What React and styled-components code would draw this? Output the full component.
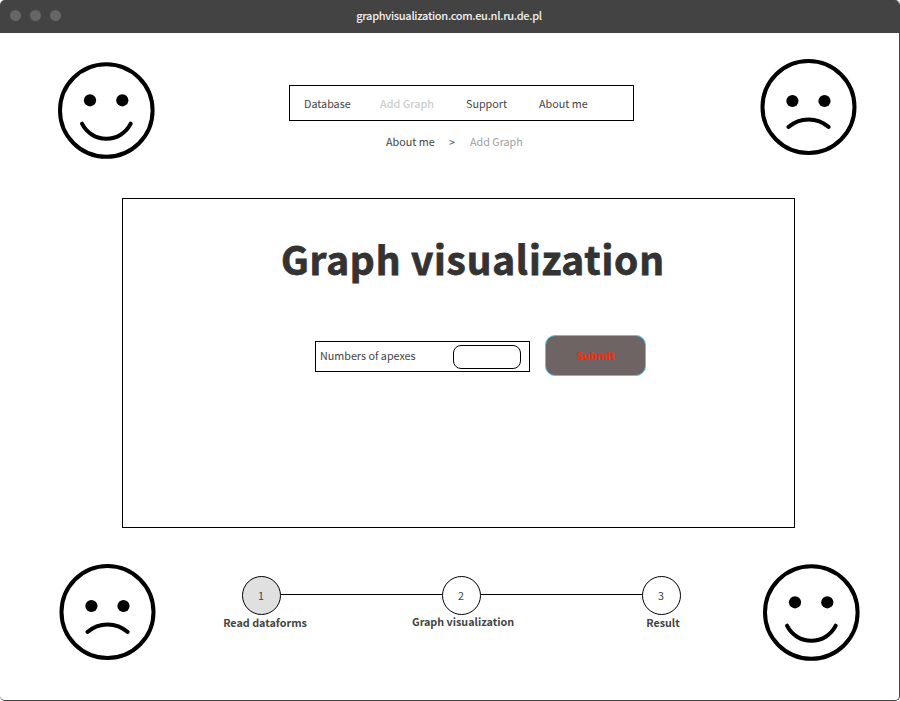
import React from "react";
import styled, { createGlobalStyle } from "styled-components";

const GlobalStyle = createGlobalStyle`
  * { box-sizing: border-box; }
  body {
    margin: 0;
    background: #fff;
    font-family: "Noto Sans CJK SC", "Noto Sans", sans-serif;
    font-size: 10.75px;
    line-height: 16px;
    color: #444;
  }
`;

const Window = styled.div`
  width: 900px;
  height: 701px;
  border: solid #444;
  border-width: 0 1px 1px 0;
  border-radius: 5px;
  overflow: hidden;
  background: #fff;
`;

const TitleBar = styled.header`
  display: grid;
  grid-template-columns: 1fr auto 1fr;
  align-items: center;
  height: 33px;
  padding-left: 10px;
  padding-right: 11px;
  background: #434343;
`;

const Lights = styled.div`
  display: flex;
  gap: 9px;
  margin-top: -3px;
`;

const Light = styled.span`
  width: 11px;
  height: 11px;
  border-radius: 50%;
  background: #666;
`;

const Address = styled.div`
  color: #f2f2f2;
  font-size: 11px;
  font-weight: 500;
  letter-spacing: -0.3px;
  white-space: nowrap;
  margin-top: -3px;
`;

const TopRow = styled.div`
  display: grid;
  grid-template-columns: 97px 345px 97px;
  column-gap: 134px;
  height: 165px;
  padding: 26px 0 0 58px;
  align-items: start;
`;

const TopCenter = styled.div`
  margin-top: 26px;
`;

const FaceSvg = styled.svg`
  display: block;
  width: 97px;
  height: 97px;
  margin-top: ${(p) => p.$top || 0}px;
  margin-left: ${(p) => p.$left || 0}px;
`;

const Nav = styled.nav`
  display: grid;
  grid-template-columns: 76px 86px 73px auto;
  align-items: center;
  height: 36px;
  border: 1px solid #000;
  padding: 2px 0 0 14px;
`;

const NavItem = styled.a`
  white-space: nowrap;
  color: ${(p) => (p.$active ? "#ccc" : "#444")};
  font-weight: ${(p) => (p.$active ? 500 : 400)};
`;

const Crumbs = styled.div`
  display: grid;
  grid-template-columns: 63px 21px auto;
  padding: 13px 0 0 97px;
`;

const Crumb = styled.span`
  white-space: nowrap;
  color: ${(p) => (p.$current ? "#a0a0a0" : "#444")};
`;

const Panel = styled.main`
  width: 673px;
  height: 330px;
  margin-left: 122px;
  border: 1px solid #000;
`;

const Title = styled.h1`
  margin: 29px 0 0 158px;
  font-size: 38.8px;
  line-height: 60px;
  font-weight: 700;
  letter-spacing: 0.8px;
  -webkit-text-stroke: 0.8px #333;
  color: #333;
  white-space: nowrap;
`;

const Form = styled.div`
  display: flex;
  align-items: center;
  gap: 15px;
  margin: 47px 0 0 192px;
`;

const Field = styled.label`
  display: flex;
  align-items: center;
  justify-content: space-between;
  width: 215px;
  height: 31px;
  margin-top: 1px;
  padding: 0 8px 0 4px;
  border: 1px solid #000;
`;

const Input = styled.input`
  width: 68px;
  height: 24px;
  margin: 1px 0 0;
  border: 1px solid #000;
  border-radius: 8px;
  background: #fff;
`;

const Submit = styled.button`
  width: 101px;
  height: 41px;
  padding: 1px 0 0;
  border: 1px solid #5bc5e8;
  border-radius: 10px;
  background: #6f6464;
  color: #f72a0c;
  font: inherit;
  font-weight: 700;
`;

const BottomRow = styled.div`
  display: grid;
  grid-template-columns: 97px 458px 97px;
  column-gap: 67px;
  padding: 36px 0 0 59px;
`;

const Stepper = styled.div`
  display: grid;
  grid-template-columns: 39px 161px 39px 161px 39px;
  margin: 12px 0 0 19px;
`;

const Step = styled.div`
  display: flex;
  flex-direction: column;
  align-items: center;
`;

const Bullet = styled.div`
  width: 39px;
  height: 39px;
  display: flex;
  align-items: center;
  justify-content: center;
  padding: 1px 1px 0 0;
  border: 1px solid #000;
  border-radius: 50%;
  background: ${(p) => (p.$active ? "#e0e0e0" : "#fff")};
`;

const StepLabel = styled.div`
  margin: ${(p) => p.$top}px 0 0 ${(p) => p.$shift}px;
  font-weight: 700;
  white-space: nowrap;
`;

const Connector = styled.div`
  height: 1px;
  margin-top: 18px;
  background: #000;
`;

function Smile(props) {
  return (
    <FaceSvg viewBox="0 0 97 97" fill="none" stroke="#000" strokeWidth="4" strokeLinecap="round" {...props}>
      <circle cx="48.3" cy="48.5" r="46.3" />
      <circle cx="32" cy="38.3" r="6.1" fill="#000" stroke="none" />
      <circle cx="64.3" cy="38.3" r="6.1" fill="#000" stroke="none" />
      <path d="M24 61.7A27.2 27.2 0 0 0 72.7 61.7" />
    </FaceSvg>
  );
}

function Frown(props) {
  return (
    <FaceSvg viewBox="0 0 97 97" fill="none" stroke="#000" strokeWidth="4" strokeLinecap="round" {...props}>
      <circle cx="48.5" cy="48" r="46" />
      <circle cx="32.4" cy="42" r="6.1" fill="#000" stroke="none" />
      <circle cx="64.5" cy="42" r="6.1" fill="#000" stroke="none" />
      <path d="M28.4 68A30.5 30.5 0 0 1 68.7 68" />
    </FaceSvg>
  );
}

const steps = [
  { label: "Read dataforms", top: 0, shift: 7 },
  { label: "Graph visualization", top: -1, shift: 3 },
  { label: "Result", top: 0, shift: 3 },
];

export default function App() {
  return (
    <Window>
      <GlobalStyle />
      <TitleBar>
        <Lights>
          <Light />
          <Light />
          <Light />
        </Lights>
        <Address>graphvisualization.com.eu.nl.ru.de.pl</Address>
      </TitleBar>
      <TopRow>
        <Smile $top={3} />
        <TopCenter>
          <Nav>
            <NavItem>Database</NavItem>
            <NavItem $active>Add Graph</NavItem>
            <NavItem>Support</NavItem>
            <NavItem>About me</NavItem>
          </Nav>
          <Crumbs>
            <Crumb>About me</Crumb>
            <Crumb>&gt;</Crumb>
            <Crumb $current>Add Graph</Crumb>
          </Crumbs>
        </TopCenter>
        <Frown $left={-8} />
      </TopRow>
      <Panel>
        <Title>Graph visualization</Title>
        <Form>
          <Field>
            Numbers of apexes
            <Input />
          </Field>
          <Submit>Submit</Submit>
        </Form>
      </Panel>
      <BottomRow>
        <Frown />
        <Stepper>
          {steps.map((s, i) => (
            <React.Fragment key={s.label}>
              {i > 0 && <Connector />}
              <Step>
                <Bullet $active={i === 0}>{i + 1}</Bullet>
                <StepLabel $top={s.top} $shift={s.shift}>{s.label}</StepLabel>
              </Step>
            </React.Fragment>
          ))}
        </Stepper>
        <Smile $left={15} />
      </BottomRow>
    </Window>
  );
}
